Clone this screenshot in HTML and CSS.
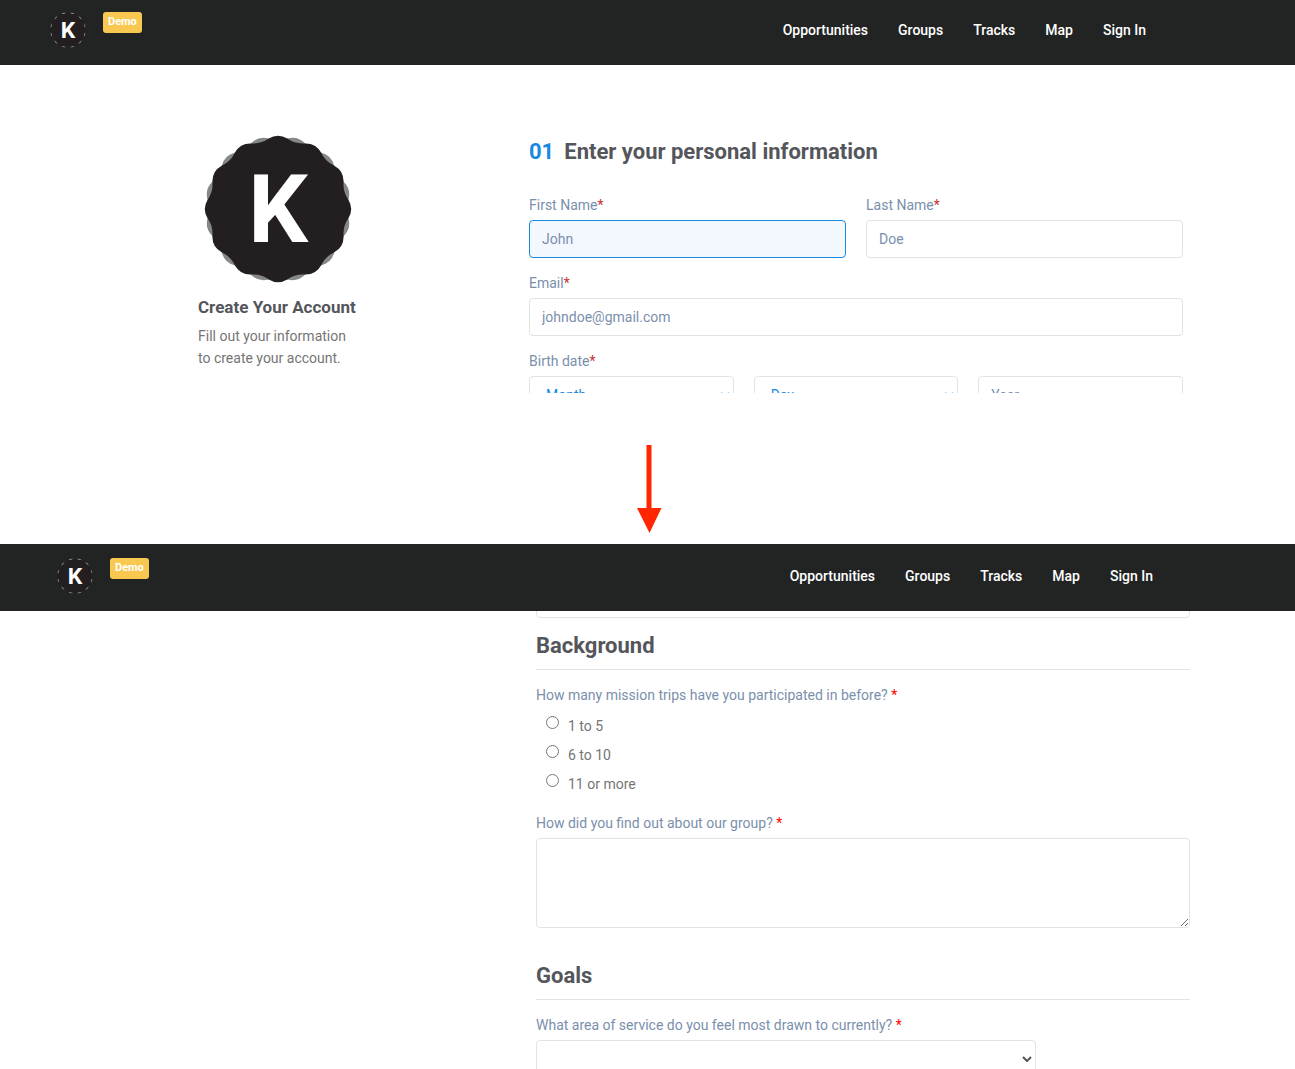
FILE: index.html
```html
<!DOCTYPE html>
<html lang="en">
<head>
<meta charset="utf-8">
<meta name="viewport" content="width=device-width, initial-scale=1">
<title>Create Your Account</title>
<link rel="stylesheet" href="styles.css">
</head>
<body>
<svg class="sprite" aria-hidden="true">
  <defs>
    <path id="seal" d="M70.400-9.300Q76 0 70.400 9.300Q64.700 17.300 65.600 27.200Q65.800 38 56.300 43.200Q47.400 47.400 43.200 56.300Q38 65.800 27.200 65.600Q17.300 64.700 9.300 70.400Q0 76-9.300 70.400Q-17.300 64.700-27.200 65.600Q-38 65.800-43.200 56.300Q-47.400 47.400-56.300 43.200Q-65.800 38-65.600 27.200Q-64.700 17.300-70.400 9.300Q-76 0-70.400-9.300Q-64.700-17.300-65.600-27.200Q-65.800-38-56.300-43.200Q-47.400-47.400-43.200-56.300Q-38-65.800-27.200-65.600Q-17.300-64.700-9.300-70.400Q0-76 9.300-70.400Q17.300-64.700 27.200-65.600Q38-65.800 43.200-56.300Q47.400-47.400 56.300-43.200Q65.800-38 65.600-27.200Q64.700-17.300 70.400-9.300Z"/>
    <symbol id="badge" viewBox="-74 -74 148 148">
      <use href="#seal" fill="#868787" transform="rotate(15)"/>
      <use href="#seal" fill="#231f20"/>
      <text class="badge-letter" x="0" y="33" text-anchor="middle">K</text>
    </symbol>
    <symbol id="chevron" viewBox="0 0 10 6">
      <path d="M1 1l4 4 4-4" fill="none" stroke="currentColor" stroke-width="2"/>
    </symbol>
  </defs>
</svg>

<header class="topbar">
  <a class="brand" href="#" aria-label="Home"><svg class="logo"><use href="#badge"/></svg></a>
  <span class="tag">Demo</span>
  <nav class="nav">
    <a href="#">Opportunities</a>
    <a href="#">Groups</a>
    <a href="#">Tracks</a>
    <a href="#">Map</a>
    <a href="#">Sign In</a>
  </nav>
</header>

<main class="panel panel-first">
  <aside class="intro">
    <svg class="seal"><use href="#badge"/></svg>
    <h1>Create Your Account</h1>
    <p>Fill out your information<br>to create your account.</p>
  </aside>
  <form class="form">
    <h2 class="step"><span class="step-number">01</span>Enter your personal information</h2>
    <div class="fields two">
      <div class="field">
        <label for="first">First Name<span class="req">*</span></label>
        <input class="control active" id="first" type="text" placeholder="John">
      </div>
      <div class="field">
        <label for="last">Last Name<span class="req">*</span></label>
        <input class="control" id="last" type="text" placeholder="Doe">
      </div>
    </div>
    <div class="field">
      <label for="email">Email<span class="req">*</span></label>
      <input class="control" id="email" type="email" placeholder="johndoe@gmail.com">
    </div>
    <div class="field">
      <label for="month">Birth date<span class="req">*</span></label>
      <div class="fields three">
        <div class="select blue">
          <select class="control" id="month"><option>Month</option></select>
          <svg class="chevron"><use href="#chevron"/></svg>
        </div>
        <div class="select blue">
          <select class="control" aria-label="Day"><option>Day</option></select>
          <svg class="chevron"><use href="#chevron"/></svg>
        </div>
        <input class="control" type="text" placeholder="Year" aria-label="Year">
      </div>
    </div>
  </form>
</main>

<div class="divider">
  <svg class="arrow" viewBox="0 0 25 88" aria-hidden="true"><path d="M9.500 0h5v63h10L12.500 88 0 63h9.500z" fill="#ff2600"/></svg>
</div>

<header class="topbar topbar-second">
  <a class="brand" href="#" aria-label="Home"><svg class="logo"><use href="#badge"/></svg></a>
  <span class="tag">Demo</span>
  <nav class="nav">
    <a href="#">Opportunities</a>
    <a href="#">Groups</a>
    <a href="#">Tracks</a>
    <a href="#">Map</a>
    <a href="#">Sign In</a>
  </nav>
</header>

<section class="panel panel-second">
  <form class="form form-scrolled">
    <div class="first-group">
      <input class="control" type="text" aria-label="Answer">
      <h2 class="group">Background</h2>
    </div>
    <fieldset class="choices">
      <legend>How many mission trips have you participated in before? <span class="req bright">*</span></legend>
      <label class="choice"><input type="radio" name="trips">1 to 5</label>
      <label class="choice"><input type="radio" name="trips">6 to 10</label>
      <label class="choice"><input type="radio" name="trips">11 or more</label>
    </fieldset>
    <div class="field">
      <label for="found">How did you find out about our group? <span class="req bright">*</span></label>
      <textarea class="control" id="found"></textarea>
    </div>
    <h2 class="group group-next">Goals</h2>
    <div class="field">
      <label for="area">What area of service do you feel most drawn to currently? <span class="req bright">*</span></label>
      <div class="select narrow">
        <select class="control" id="area"><option></option></select>
        <svg class="chevron"><use href="#chevron"/></svg>
      </div>
    </div>
  </form>
</section>
</body>
</html>
```

FILE: styles.css
```css
* {
  box-sizing: border-box;
}

body {
  display: flex;
  flex-direction: column;
  height: 100vh;
  margin: 0;
  background: #fff;
  color: #757575;
  font: 14px/22px Roboto, "Liberation Sans", sans-serif;
}

h1,
h2,
p {
  margin: 0;
}

.sprite {
  position: absolute;
  width: 0;
  height: 0;
}

.badge-letter {
  fill: #fff;
  font: bold 94px Roboto, sans-serif;
}

/* Top bar */
.topbar {
  display: flex;
  flex: none;
  align-items: flex-start;
  height: 65px;
  padding: 12px 149px 0 50px;
  background: #222423;
}

.topbar-second {
  height: 67px;
  padding: 14px 142px 0 57px;
}

.brand,
.logo {
  display: block;
  width: 36px;
  height: 36px;
}

.tag {
  margin-left: 17px;
  padding: 0 5px;
  border-radius: 3px;
  background: #f9c851;
  color: #fff;
  font-size: 11px;
  font-weight: 700;
  line-height: 20px;
  padding-bottom: 1px;
}

.nav {
  display: flex;
  gap: 30px;
  margin-left: auto;
  line-height: 36px;
}

.nav a {
  color: #fff;
  font-weight: 500;
  text-decoration: none;
}

/* Panels */
.panel {
  display: grid;
  flex: none;
  grid-template-columns: 331px 1fr;
  overflow: hidden;
}

.panel-first {
  height: 328px;
  padding: 71px 112px 0 198px;
}

.panel-second {
  flex: 1;
  min-height: 0;
  padding: 0 105px 0 205px;
}

.panel-second .form {
  grid-column: 2;
}

.intro {
  width: 160px;
}

.seal {
  display: block;
  width: 148px;
  height: 148px;
  margin: -1px auto 12px;
}

.intro h1 {
  margin-bottom: 6px;
  color: #54565b;
  font-size: 17px;
  line-height: 24px;
  white-space: nowrap;
}

/* Form */
.form {
  display: flex;
  flex-direction: column;
  gap: 14px;
}

.step,
.group {
  color: #54565b;
  font-size: 22px;
  line-height: 32px;
}

.step {
  margin-bottom: 12px;
}

.step-number {
  margin-right: 10px;
  color: #188ae2;
}

.group {
  padding-bottom: 7px;
  border-bottom: 1px solid #e3e3e3;
}

.first-group .group {
  margin-top: 12px;
}

.group-next {
  margin-top: 18px;
}

.fields {
  display: grid;
  gap: 20px;
}

.two {
  grid-template-columns: 1fr 1fr;
}

.three {
  grid-template-columns: 1fr 1fr 1fr;
}

.field {
  display: flex;
  flex-direction: column;
  gap: 4px;
}

.field > label,
.choices legend {
  padding: 0;
  color: #7a8fac;
}

.req {
  color: #c9302c;
}

.bright {
  color: #f00;
}

.control {
  display: block;
  width: 100%;
  height: 38px;
  padding: 0 12px;
  border: 1px solid #e3e3e3;
  border-radius: 4px;
  background: #fff;
  color: #7a8fac;
  font: inherit;
}

.control::placeholder {
  color: #7a8fac;
  opacity: 1;
}

.active {
  border-color: #188ae2;
  background: #f3f7fe;
}

textarea.control {
  height: 90px;
}

.select {
  position: relative;
}

.select .control {
  padding-left: 16px;
  appearance: none;
}

.blue .control {
  color: #188ae2;
}

.narrow {
  width: 500px;
  max-width: 100%;
}

.chevron {
  position: absolute;
  top: 16px;
  right: 4px;
  width: 10px;
  height: 6px;
  color: #555;
  pointer-events: none;
}

.blue .chevron {
  color: #188ae2;
}

.form-scrolled {
  margin-top: -31px;
}

.choices {
  margin: 0 0 -1px;
  padding: 0;
  border: 0;
}

.choices legend {
  margin-bottom: 6px;
}

.choice {
  display: flex;
  gap: 9px;
  padding-left: 10px;
  line-height: 29px;
}

.choice input {
  width: 13px;
  height: 13px;
  margin: 4px 0 0;
  border: 1px solid #767676;
  border-radius: 50%;
  background: #fff;
  appearance: none;
}

.choice input:checked {
  border: 4px solid #188ae2;
}

/* Arrow between the two panels */
.divider {
  display: flex;
  flex: none;
  justify-content: center;
  height: 151px;
  padding: 52px 0 0 4px;
}

.arrow {
  width: 25px;
  height: 88px;
}
```
